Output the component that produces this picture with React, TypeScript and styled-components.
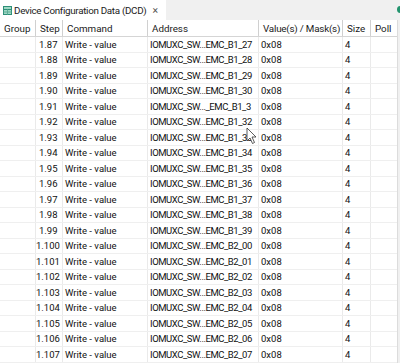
import React from 'react'
import styled, { createGlobalStyle } from 'styled-components'

const COLUMNS = '36px 27px 85px 111px 84px 28px 26px'

const rows = [
	...Array.from({ length: 13 }, (_, i) => ({ step: `1.${87 + i}`, reg: `B1_${27 + i}` })),
	...Array.from({ length: 8 }, (_, i) => ({ step: `1.${100 + i}`, reg: `B2_0${i}` }))
]

// the 1.91 row is caught mid-repaint in the capture
const addressOf = (reg: string) => (reg === 'B1_31' ? 'IOMUXC_SW..._EMC_B1_3' : `IOMUXC_SW...EMC_${reg}`)

const App = () => {
	return (
		<Page>
			<GlobalStyle />
			<TabBar>
				<Tab>
					<TableIcon />
					<TabTitle>Device Configuration Data (DCD)</TabTitle>
					<Close>×</Close>
				</Tab>
				<StatusDot />
			</TabBar>
			<Grid>
				<HeaderRow>
					<HeadCell>Group</HeadCell>
					<HeadCell>Step</HeadCell>
					<HeadCell>Command</HeadCell>
					<HeadCell>Address</HeadCell>
					<HeadCell $tight>Value(s) / Mask(s)</HeadCell>
					<HeadCell>Size</HeadCell>
					<HeadCell>Poll</HeadCell>
				</HeaderRow>
				{rows.map(r => (
					<Row key={r.step}>
						<Cell />
						<Cell $pad={r.step.length > 4 ? 0 : 3}>{r.step}</Cell>
						<Cell>Write - value</Cell>
						<Cell $tight>{addressOf(r.reg)}</Cell>
						<Cell>0x08</Cell>
						<Cell>4</Cell>
						<Cell />
					</Row>
				))}
				<Cursor />
			</Grid>
		</Page>
	)
}

const TableIcon = () => (
	<svg width="9" height="9" viewBox="0 0 9 9">
		<rect x="0.5" y="0.5" width="8" height="8" fill="#9fd8c4" stroke="#2e8f78" />
		<line x1="0.5" y1="3.5" x2="8.5" y2="3.5" stroke="#2e8f78" />
		<line x1="0.5" y1="6" x2="8.5" y2="6" stroke="#5fae98" />
		<line x1="4.5" y1="3.5" x2="4.5" y2="8.5" stroke="#5fae98" />
	</svg>
)

const Cursor = () => (
	<CursorSvg width="12" height="18" viewBox="0 0 12 18">
		<path d="M1 1 L1 14 L4 11 L6.5 16.5 L8.5 15.5 L6 10 L10 10 Z" fill="#fff" stroke="#333" strokeWidth="0.8" strokeLinejoin="round" />
	</CursorSvg>
)

const GlobalStyle = createGlobalStyle`
	html, body {
		margin: 0;
		padding: 0;
		background: #f0f0f0;
	}
	body {
		font-family: Roboto, "Noto Sans", sans-serif;
		color: #111;
	}
`

const Page = styled.div`
	width: 400px;
	height: 363px;
	overflow: hidden;
	background: #f0f0f0;
`

const TabBar = styled.div`
	display: flex;
	align-items: stretch;
	height: 20px;
	position: relative;
	background: #f0f0f0;
`

const Tab = styled.div`
	display: flex;
	align-items: center;
	gap: 2px;
	padding: 0 8px 0 3px;
	background: #fff;
	font-size: 9.8px;
	letter-spacing: -0.3px;
	color: #1a1a1a;
	white-space: nowrap;
`

const TabTitle = styled.span``

const Close = styled.span`
	margin-left: 4px;
	font-size: 10.5px;
	color: #555;
`

const StatusDot = styled.span`
	position: absolute;
	right: -4px;
	top: 6px;
	width: 7px;
	height: 7px;
	border-radius: 50%;
	background: #23946e;
`

const Grid = styled.div`
	position: relative;
	width: 397px;
	background: #fff;
	border-right: 1px solid #dcdcdc;
	height: 343px;
	font-size: 9.5px;
`

const HeaderRow = styled.div`
	display: grid;
	grid-template-columns: ${COLUMNS};
	height: 16px;
	border-bottom: 1px solid #d5d5d5;
	background: #fff;
	font-size: 9.8px;
`

const HeadCell = styled.div<{ $tight?: boolean }>`
	display: flex;
	align-items: center;
	padding-left: 4px;
	border-right: 1px solid #d0d0d0;
	white-space: nowrap;
	overflow: hidden;
	color: #1a1a1a;
	letter-spacing: ${p => (p.$tight ? '-0.2px' : 'normal')};
	&:last-child {
		border-right: none;
	}
`

const Row = styled.div`
	display: grid;
	grid-template-columns: ${COLUMNS};
	height: 15.5px;
	box-sizing: border-box;
	border-bottom: 1px solid #efefef;
`

const Cell = styled.div<{ $pad?: number; $tight?: boolean }>`
	display: flex;
	align-items: center;
	padding-left: ${p => (p.$pad ?? 2)}px;
	border-right: 1px solid #eaeaea;
	white-space: nowrap;
	overflow: hidden;
	letter-spacing: ${p => (p.$tight ? '-0.45px' : 'normal')};
	&:last-child {
		border-right: none;
	}
`

const CursorSvg = styled.svg`
	position: absolute;
	left: 246px;
	top: 107px;
`

export default App
